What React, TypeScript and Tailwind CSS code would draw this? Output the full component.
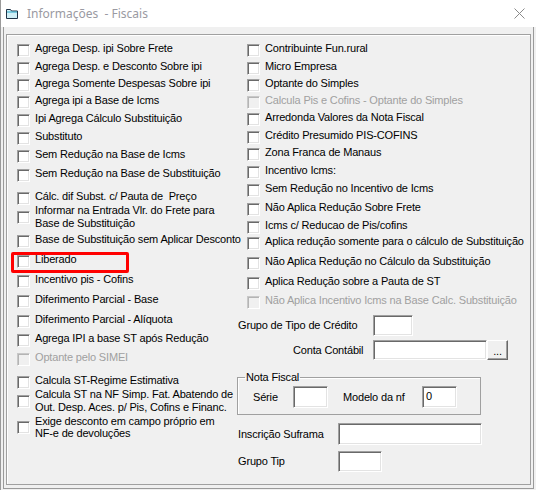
type Row = { t: string; t2?: string; h: string; off?: boolean; tight?: boolean };

const leftRows: Row[] = [
  { t: 'Agrega Desp. ipi Sobre Frete', h: 'h-[18px]' },
  { t: 'Agrega Desp. e Desconto Sobre ipi', h: 'h-[17px]' },
  { t: 'Agrega Somente Despesas Sobre ipi', h: 'h-[17px]' },
  { t: 'Agrega ipi a Base de Icms', h: 'h-[18px]' },
  { t: 'Ipi Agrega Cálculo Substituição', h: 'h-[18px]' },
  { t: 'Substituto', h: 'h-[18px]' },
  { t: 'Sem Redução na Base de Icms', h: 'h-[19px]' },
  { t: 'Sem Redução na Base de Substituição', h: 'h-[23px]' },
  { t: 'Cálc. dif Subst. c/ Pauta de \u00a0Preço', h: 'h-[14px]' },
  { t: 'Informar na Entrada Vlr. do Frete para', t2: 'Base de Substituição', h: 'h-[29px]' },
  { t: 'Base de Substituição sem Aplicar Desconto', h: 'h-[20px]' },
  { t: 'Liberado', h: 'h-[20px]' },
  { t: 'Incentivo pis - Cofins', h: 'h-[20px]' },
  { t: 'Diferimento Parcial - Base', h: 'h-[20px]' },
  { t: 'Diferimento Parcial - Alíquota', h: 'h-[19px]' },
  { t: 'Agrega IPI a base ST após Redução', h: 'h-[19px]' },
  { t: 'Optante pelo SIMEI', h: 'h-[23px]', off: true },
  { t: 'Calcula ST-Regime Estimativa', h: 'h-[14px]' },
  { t: 'Calcula ST na NF Simp. Fat. Abatendo de', t2: 'Out. Desp. Aces. p/ Pis, Cofins e Financ.', h: 'h-[27px]' },
  { t: 'Exige desconto em campo próprio em', t2: 'NF-e de devoluções', h: 'h-[24px]', tight: true },
];

const rightRows: Row[] = [
  { t: 'Contribuinte Fun.rural', h: 'h-[18px]' },
  { t: 'Micro Empresa', h: 'h-[17px]' },
  { t: 'Optante do Simples', h: 'h-[17px]' },
  { t: 'Calcula Pis e Cofins - Optante do Simples', h: 'h-[17px]', off: true },
  { t: 'Arredonda Valores da Nota Fiscal', h: 'h-[18px]' },
  { t: 'Crédito Presumido PIS-COFINS', h: 'h-[17px]' },
  { t: 'Zona Franca de Manaus', h: 'h-[18px]' },
  { t: 'Incentivo Icms:', h: 'h-[18px]' },
  { t: 'Sem Redução no Incentivo de Icms', h: 'h-[19px]' },
  { t: 'Não Aplica Redução Sobre Frete', h: 'h-[18px]' },
  { t: 'Icms c/ Reducao de Pis/cofins', h: 'h-[16px]' },
  { t: 'Aplica redução somente para o cálculo de Substituição', h: 'h-[20px]' },
  { t: 'Não Aplica Redução no Cálculo da Substituição', h: 'h-[20px]' },
  { t: 'Aplica Redução sobre a Pauta de ST', h: 'h-[19px]' },
  { t: 'Não Aplica Incentivo Icms na Base Calc. Substituição', h: 'h-[21px]', off: true },
];

const Box = ({ off }: { off?: boolean }) => (
  <span
    className={
      off
        ? 'block w-[13px] h-[13px] shrink-0 bg-[#f0f0f0] border border-t-[#c8c8c8] border-l-[#c8c8c8] border-r-white border-b-white shadow-[inset_1px_1px_0_#b4b4b4]'
        : 'block w-[13px] h-[13px] shrink-0 bg-white border border-t-[#a0a0a0] border-l-[#a0a0a0] border-r-white border-b-white shadow-[inset_1px_1px_0_#696969,inset_-1px_-1px_0_#e3e3e3]'
    }
  ></span>
);

const Check = ({ row }: { row: Row }) => {
  const color = row.off ? 'text-[#a0a0a0]' : 'text-black';
  if (row.t2) {
    return (
      <div className={`${row.h} shrink-0`}>
        <div className="flex items-center gap-[5px]">
          <Box off={row.off} />
          <div className={`${color} ${row.tight ? 'leading-[12px]' : 'leading-[13px]'} whitespace-nowrap`}>
            <div>{row.t}</div>
            <div>{row.t2}</div>
          </div>
        </div>
      </div>
    );
  }
  return (
    <div className={`${row.h} shrink-0`}>
      <div className="flex items-start gap-[5px]">
        <span className="mt-[2px]">
          <Box off={row.off} />
        </span>
        <span className={`${color} leading-[13px] whitespace-nowrap`}>{row.t}</span>
      </div>
    </div>
  );
};

const Field = ({ w, h, value }: { w: string; h: string; value?: string }) => (
  <div
    className={`${w} ${h} shrink-0 bg-white border border-t-[#a0a0a0] border-l-[#a0a0a0] border-r-white border-b-white shadow-[inset_1px_1px_0_#696969,inset_-1px_-1px_0_#e3e3e3] pl-[3px] pt-[3px] leading-[13px]`}
  >
    {value}
  </div>
);

export default function App() {
  return (
    <div className="w-[536px] h-[490px] bg-[#f0f0f0] flex flex-col relative overflow-hidden text-[11px] tracking-[-0.17px] font-['Liberation_Sans',Arial,sans-serif] text-black border-l border-[#9a9a9a]">
      {/* title bar */}
      <div className="h-[27px] bg-white flex items-center shrink-0 tracking-normal">
        <svg width="12" height="10" viewBox="0 0 12 10" className="ml-[5px] mt-[1px]">
          <path d="M0.5 0.5h4l1 1.5h6v7.5h-11z" fill="#cfeff6" stroke="#1f3347" />
          <path d="M1 3h10" stroke="#2aa6c8" />
        </svg>
        <span className="ml-[9px] text-[12px] text-[#9a9aa2] font-['Noto_Sans',sans-serif] whitespace-pre">
          Informações  - Fiscais
        </span>
        <svg width="11" height="11" viewBox="0 0 11 11" className="ml-auto mr-[11px]">
          <path d="M0.5 0.5l10 10M10.5 0.5l-10 10" stroke="#8a8a8a" strokeWidth="1" />
        </svg>
      </div>

      {/* window body */}
      <div className="flex-1 px-[2px] pb-[1px]">
        <div className="h-full border-l border-r border-b border-[#9a9a9a] pt-[7px] pl-[2px] pr-[2px] pb-[3px]">
          <div className="h-full border border-[#a0a0a0] shadow-[inset_1px_1px_0_#fff] flex pl-[10px] pt-[7px]">
            {/* left column */}
            <div className="w-[221px] shrink-0 flex flex-col">
              {leftRows.map((r, i) => (
                <Check key={i} row={r} />
              ))}
            </div>

            {/* right column */}
            <div className="flex flex-col">
              <div className="pl-[9px] flex flex-col">
                {rightRows.map((r, i) => (
                  <Check key={i} row={r} />
                ))}
              </div>

              <div className="h-[25px] flex items-start">
                <span className="w-[135px] leading-[21px] whitespace-nowrap">Grupo de Tipo de Crédito</span>
                <Field w="w-[40px]" h="h-[21px]" />
              </div>

              <div className="h-[31px] flex items-start">
                <span className="w-[135px] pl-[55px] leading-[20px] whitespace-nowrap">Conta Contábil</span>
                <Field w="w-[114px]" h="h-[20px]" />
                <div className="w-[21px] h-[20px] bg-[#f0f0f0] border border-t-white border-l-white border-r-[#696969] border-b-[#696969] shadow-[inset_-1px_-1px_0_#a0a0a0] flex items-end justify-center leading-[13px] pb-[1px]">
                  ...
                </div>
              </div>

              <div className="h-[52px]">
                <fieldset className="-ml-[1px] w-[244px] h-[44px] border border-[#a0a0a0] shadow-[inset_1px_1px_0_#fff]">
                  <legend className="ml-[7px] px-[1px] leading-[13px]">Nota Fiscal</legend>
                  <div className="flex items-center mt-[2px] h-[22px]">
                    <span className="ml-[15px] w-[40px]">Série</span>
                    <Field w="w-[35px]" h="h-[22px]" />
                    <span className="ml-[15px] w-[79px]">Modelo da nf</span>
                    <Field w="w-[35px]" h="h-[22px]" value="0" />
                  </div>
                </fieldset>
              </div>

              <div className="h-[28px] flex items-start">
                <span className="w-[100px] leading-[22px] whitespace-nowrap">Inscrição Suframa</span>
                <Field w="w-[144px]" h="h-[22px]" />
              </div>

              <div className="flex items-start">
                <span className="w-[100px] leading-[21px] whitespace-nowrap">Grupo Tip</span>
                <Field w="w-[44px]" h="h-[21px]" />
              </div>
            </div>
          </div>
        </div>
      </div>

      {/* highlight marker */}
      <div className="absolute left-[10px] top-[252px] w-[118px] h-[21px] border-[3px] border-[#ff0000] rounded-[2px]"></div>
    </div>
  );
}
